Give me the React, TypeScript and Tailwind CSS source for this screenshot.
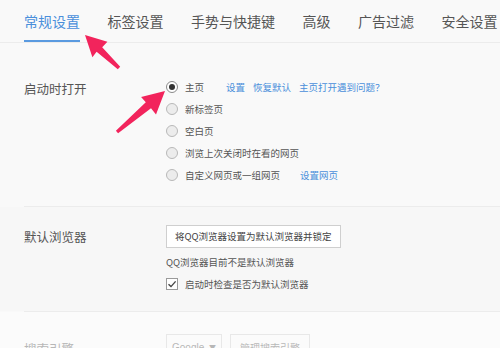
import React from "react";

const tabs = ["常规设置", "标签设置", "手势与快捷键", "高级", "广告过滤", "安全设置"];

const startOptions = [
  { label: "主页", checked: true },
  { label: "新标签页" },
  { label: "空白页" },
  { label: "浏览上次关闭时在看的网页" },
  { label: "自定义网页或一组网页" },
];

function Radio({ checked }: { checked?: boolean }) {
  return (
    <span
      className={
        "flex items-center justify-center w-[12px] h-[12px] rounded-full border shrink-0 " +
        (checked ? "border-[#8a8a8a] bg-white" : "border-[#b8b8b8] bg-[#ececec]")
      }
    >
      {checked && <span className="w-[6px] h-[6px] rounded-full bg-[#333]" />}
    </span>
  );
}

export default function App() {
  return (
    <div
      className="relative w-[500px] h-[348px] overflow-hidden bg-[#f9f9f9] text-[#555]"
      style={{ fontFamily: '"Noto Sans CJK SC", "Noto Sans", sans-serif' }}
    >
      {/* tabs */}
      <div className="flex h-[43px] gap-[27.5px] pl-6 border-b border-[#ececec] whitespace-nowrap">
        {tabs.map((t, i) => (
          <div
            key={t}
            className={
              "flex items-center h-full text-[14px] " +
              (i === 0 ? "text-[#4a8fdb] border-b-2 border-[#5a9ae0] pt-[2px]" : "text-[#555]")
            }
          >
            {t}
          </div>
        ))}
      </div>

      {/* startup */}
      <div className="flex pl-6 pt-[33px] pb-[20px]">
        <div className="w-[142px] text-[12.5px] leading-[22px] pt-[2px]">启动时打开</div>
        <div className="flex flex-col whitespace-nowrap">
          {startOptions.map((o, i) => (
            <div key={o.label} className="flex items-center h-[22px] text-[9.5px]">
              <Radio checked={o.checked} />
              <span className="ml-[7px]">{o.label}</span>
              {i === 0 && (
                <div className="flex gap-[8px] ml-[22px] text-[#4a8fdb]">
                  <span>设置</span>
                  <span>恢复默认</span>
                  <span>主页打开遇到问题？</span>
                </div>
              )}
              {i === 4 && <span className="ml-[20px] text-[#4a8fdb]">设置网页</span>}
            </div>
          ))}
        </div>
      </div>

      <div className="ml-6 border-t border-[#ececec]" />

      {/* default browser */}
      <div className="flex pl-6 pt-[18px] pb-[16px] bg-[#f7f7f7]">
        <div className="w-[142px] text-[12.5px] leading-[23px]">默认浏览器</div>
        <div className="flex flex-col items-start whitespace-nowrap">
          <div className="flex items-center h-[23px] px-[8px] border border-[#cfcfcf] bg-white text-[9.5px] text-[#444]">
            将QQ浏览器设置为默认浏览器并锁定
          </div>
          <div className="flex items-center h-[22px] mt-[3px] text-[9.5px]">QQ浏览器目前不是默认浏览器</div>
          <div className="flex items-center h-[22px] text-[9.5px]">
            <span className="flex items-center justify-center w-[12px] h-[12px] border border-[#9a9a9a] bg-white">
              <svg width="10" height="10" viewBox="0 0 10 10">
                <path d="M1.5 5.2 L4 7.6 L8.6 2.4" fill="none" stroke="#444" strokeWidth="1.4" />
              </svg>
            </span>
            <span className="ml-[7px]">启动时检查是否为默认浏览器</span>
          </div>
        </div>
      </div>

      <div className="ml-6 border-t border-[#ececec]" />

      {/* search engine (faded) */}
      <div className="flex pl-6 pt-[22px] bg-white opacity-40">
        <div className="w-[142px] text-[12.5px] leading-[24px] pt-[3px]">搜索引擎</div>
        <div className="flex gap-[8px]">
          <div className="flex items-center justify-between w-[56px] h-[26px] px-[5px] border border-[#cfcfcf] bg-white text-[10px]">
            <span style={{ fontFamily: '"Liberation Sans", sans-serif' }}>Google</span>
            <span className="text-[7px]">▼</span>
          </div>
          <div className="flex items-center justify-center w-[80px] h-[26px] border border-[#cfcfcf] bg-white text-[10px]">
            管理搜索引擎
          </div>
        </div>
      </div>

      {/* annotation arrows */}
      <svg className="absolute inset-0 pointer-events-none" width="500" height="348">
        <polygon
          fill="#f2245c"
          points="120.2,66.8 102.2,47.3 107.4,41.8 85,35 92.4,57.2 96.6,51.7 117.8,69.2"
        />
        <polygon
          fill="#f2245c"
          points="118.1,133.2 151,108.3 156,114.5 165,91 141.1,96.9 145.8,102.3 115.9,130.8"
        />
      </svg>
    </div>
  );
}
